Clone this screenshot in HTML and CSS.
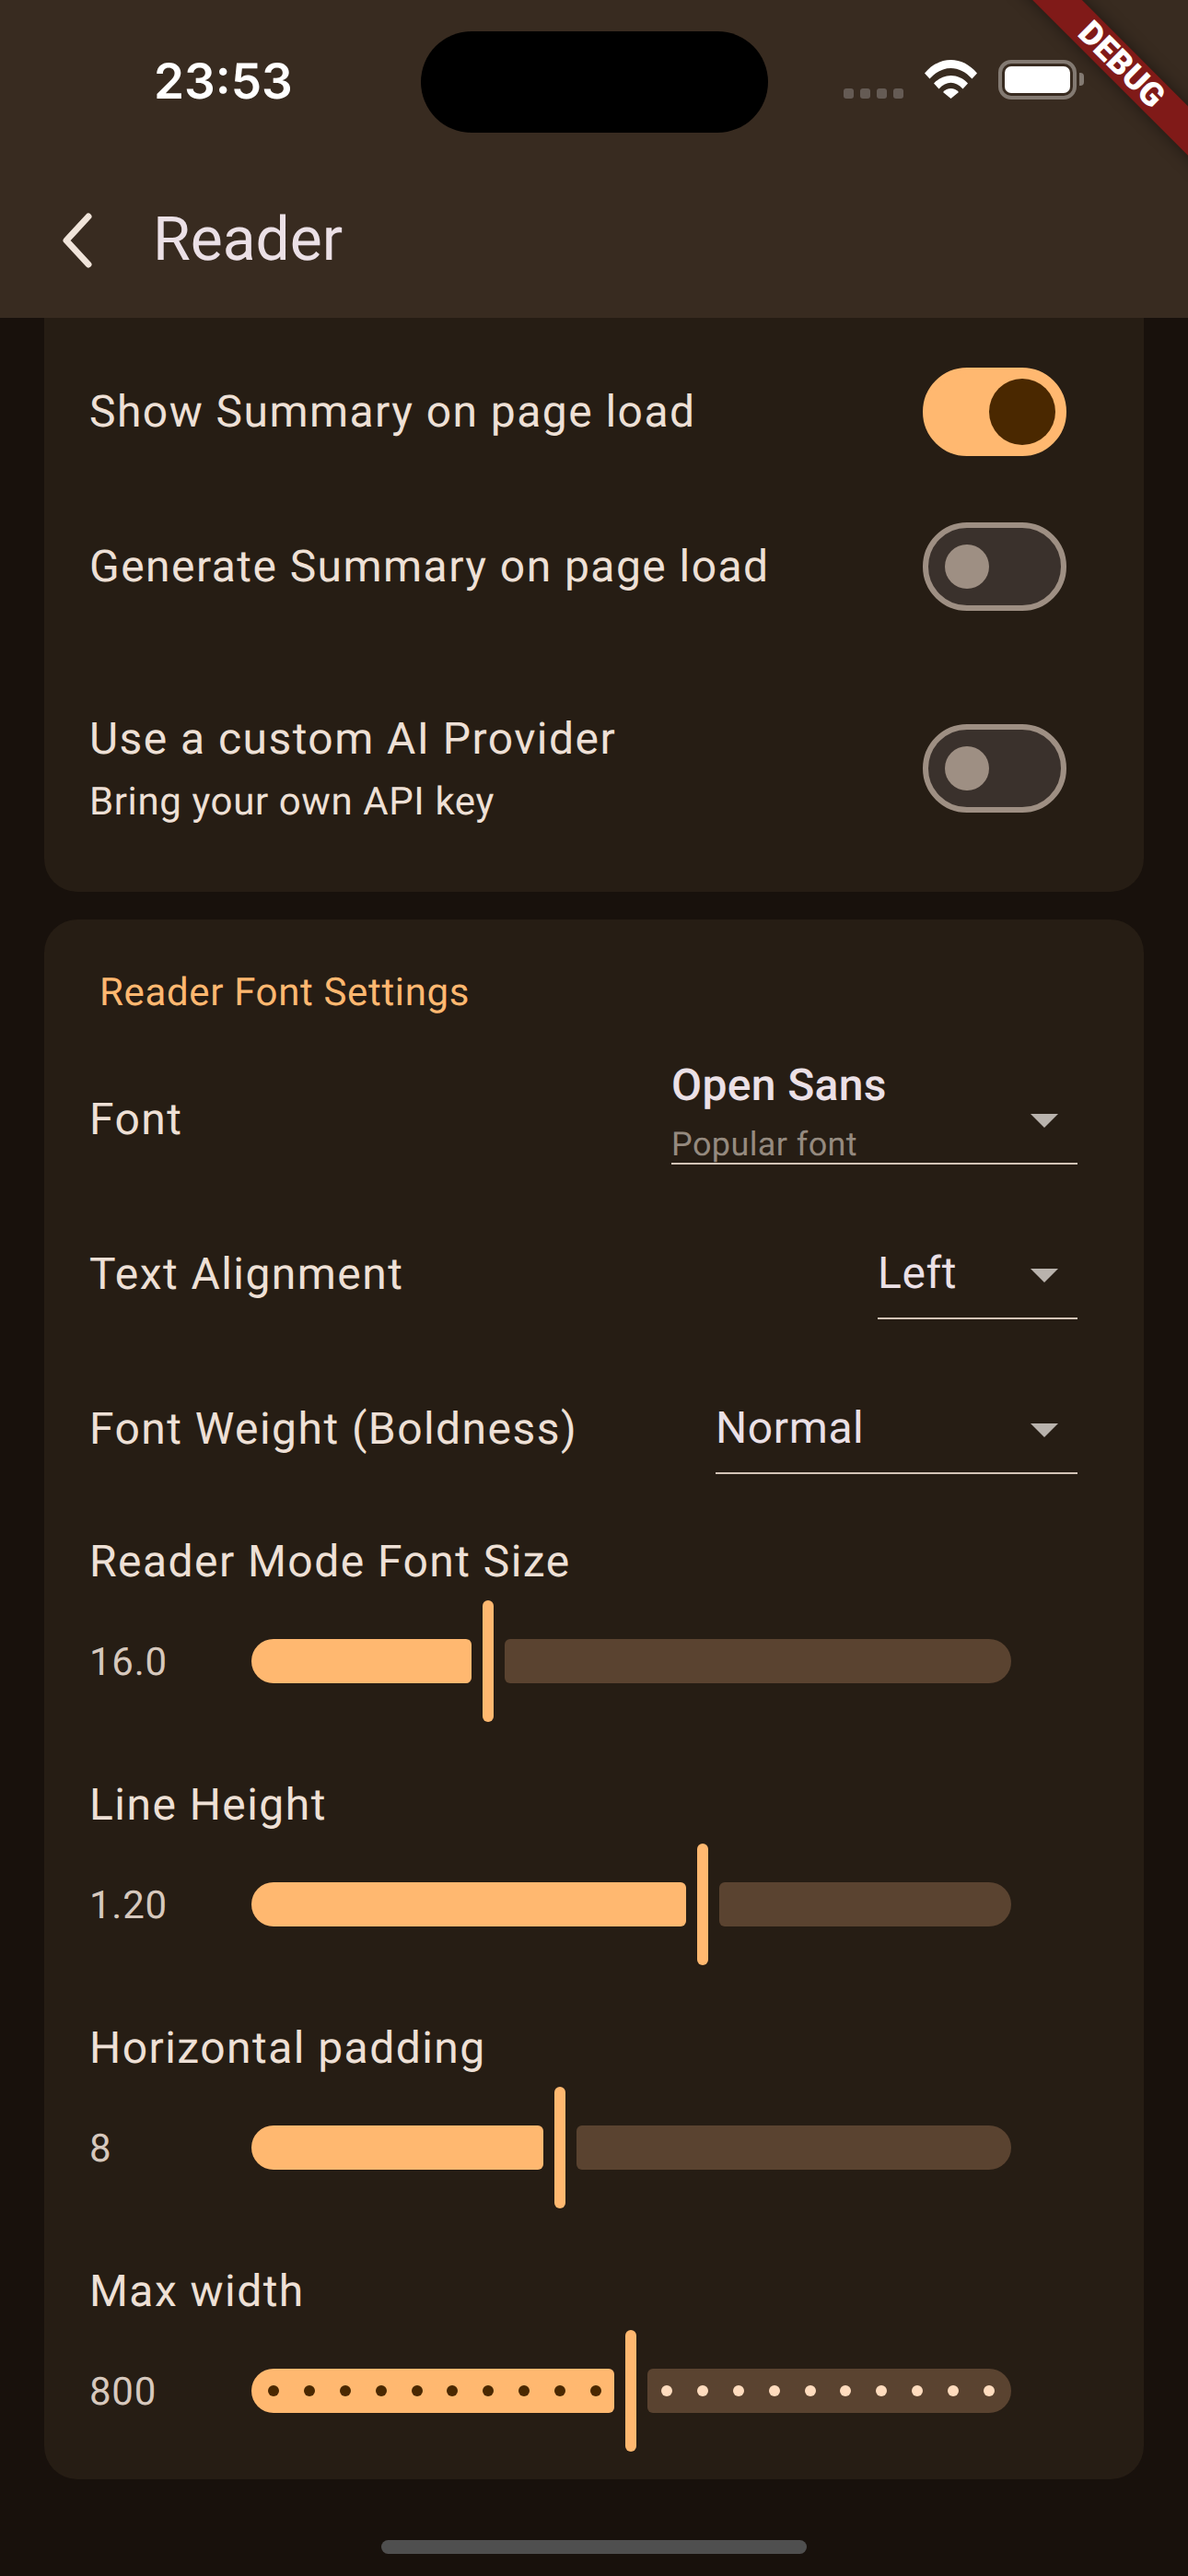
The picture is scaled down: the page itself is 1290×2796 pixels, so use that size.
FILE: index.html
```html
<!DOCTYPE html>
<html lang="en">
  <head>
    <meta charset="UTF-8" />
    <meta name="viewport" content="width=device-width, initial-scale=1.0" />
    <title>Reader</title>
    <link rel="stylesheet" href="styles.css">
  </head>
  <body>
    <header class="app-bar">
      <div class="status-bar">
        <span class="clock">23:53</span>
        <div class="island"></div>
        <div class="status-icons">
          <div class="signal"><i></i><i></i><i></i><i></i></div>
          <svg class="wifi" width="57" height="42" viewBox="0 0 57 42">
            <path d="M0 14.500C16 -4.800 41 -4.800 57 14.500L51.500 20.500C38 5 19 5 5.500 20.500Z" fill="#fff" />
            <path d="M10 25.500C20 14 37 14 47 25.500L41.500 31.500C33.500 22.500 23.500 22.500 15.500 31.500Z" fill="#fff" />
            <path d="M20 35C24.500 29.500 32.500 29.500 37 35L28.500 42Z" fill="#fff" />
          </svg>
          <div class="battery"><div class="battery-level"></div></div>
          <div class="battery-tip"></div>
        </div>
      </div>
      <div class="toolbar">
        <svg class="back" width="40" height="64" viewBox="0 0 40 64">
          <path d="M32 6L8 32L32 58" fill="none" stroke="#f0e4da" stroke-width="7" stroke-linecap="round" stroke-linejoin="round" />
        </svg>
        <h1>Reader</h1>
      </div>
    </header>

    <div class="debug-banner">DEBUG</div>

    <main>
      <section class="card card-top">
        <div class="switch-row">
          <span class="label">Show Summary on page load</span>
          <div class="switch on"><i></i></div>
        </div>
        <div class="switch-row">
          <span class="label">Generate Summary on page load</span>
          <div class="switch"><i></i></div>
        </div>
        <div class="switch-row tall">
          <div class="label-stack">
            <span class="label">Use a custom AI Provider</span>
            <span class="sublabel">Bring your own API key</span>
          </div>
          <div class="switch"><i></i></div>
        </div>
      </section>

      <section class="card card-font">
        <h2>Reader Font Settings</h2>

        <div class="select-row">
          <span class="label">Font</span>
          <div class="dropdown w-font">
            <div class="dropdown-text">
              <span class="font-name">Open Sans</span>
              <span class="font-note">Popular font</span>
            </div>
            <i class="caret"></i>
          </div>
        </div>
        <div class="select-row">
          <span class="label">Text Alignment</span>
          <div class="dropdown w-align">
            <div class="dropdown-text"><span class="value">Left</span></div>
            <i class="caret"></i>
          </div>
        </div>
        <div class="select-row">
          <span class="label">Font Weight (Boldness)</span>
          <div class="dropdown w-weight">
            <div class="dropdown-text"><span class="value">Normal</span></div>
            <i class="caret"></i>
          </div>
        </div>

        <div class="slider-block">
          <span class="label">Reader Mode Font Size</span>
          <div class="slider-row">
            <span class="slider-value">16.0</span>
            <div class="slider">
              <div class="track active" style="width: 239px"></div>
              <div class="thumb"></div>
              <div class="track rest"></div>
            </div>
          </div>
        </div>

        <div class="slider-block">
          <span class="label">Line Height</span>
          <div class="slider-row">
            <span class="slider-value">1.20</span>
            <div class="slider">
              <div class="track active" style="width: 472px"></div>
              <div class="thumb"></div>
              <div class="track rest"></div>
            </div>
          </div>
        </div>

        <div class="slider-block">
          <span class="label">Horizontal padding</span>
          <div class="slider-row">
            <span class="slider-value">8</span>
            <div class="slider">
              <div class="track active" style="width: 317px"></div>
              <div class="thumb"></div>
              <div class="track rest"></div>
            </div>
          </div>
        </div>

        <div class="slider-block">
          <span class="label">Max width</span>
          <div class="slider-row">
            <span class="slider-value">800</span>
            <div class="slider">
              <div class="track active stops" style="width: 394px">
                <i></i><i></i><i></i><i></i><i></i><i></i><i></i><i></i><i></i><i></i>
              </div>
              <div class="thumb"></div>
              <div class="track rest stops">
                <i></i><i></i><i></i><i></i><i></i><i></i><i></i><i></i><i></i><i></i>
              </div>
            </div>
          </div>
        </div>
      </section>
    </main>

    <div class="home-indicator"></div>
  </body>
</html>
```

FILE: styles.css
```css
* {
  box-sizing: border-box;
}

h1,
h2 {
  margin: 0;
  font-weight: 400;
}

body {
  --orange: #ffb870;
  --orange-dark: #4a2800;
  --text: #eee0d6;
  --title: #ebe0e6;
  position: relative;
  margin: 0;
  width: 1290px;
  height: 2796px;
  overflow: hidden;
  background: #18110c;
  color: var(--text);
  font-family: Roboto, "Liberation Sans", sans-serif;
  text-rendering: geometricPrecision;
}

/* top bar */

.app-bar {
  height: 345px;
  background: #382b20;
}

.status-bar {
  display: grid;
  grid-template-columns: 457px 377px 1fr;
  height: 177px;
  padding-top: 34px;
}

.clock {
  align-self: start;
  padding: 19px 0 0 167px;
  color: #fff;
  font-family: Inter, "Liberation Sans", sans-serif;
  font-size: 53px;
  font-weight: 600;
  line-height: 70px;
}

.island {
  height: 110px;
  border-radius: 55px;
  background: #000;
}

.status-icons {
  display: flex;
  align-items: flex-end;
  height: 74px;
  padding-left: 82px;
}

.signal {
  display: flex;
  gap: 7px;
  margin-right: 23px;
  margin-bottom: 1px;

  i {
    width: 11px;
    height: 11px;
    border-radius: 3px;
    background: #655b54;
  }
}

.wifi {
  margin-right: 23px;
  margin-bottom: 1px;
}

.battery {
  width: 85px;
  height: 43px;
  padding: 3px;
  border: 4px solid #837a72;
  border-radius: 14px;
}

.battery-level {
  height: 100%;
  border-radius: 7px;
  background: #fff;
}

.battery-tip {
  width: 5px;
  height: 14px;
  margin: 0 0 15px 3px;
  border-radius: 0 4px 4px 0;
  background: #837a72;
}

.toolbar {
  display: flex;
  align-items: center;
  height: 168px;
  padding-left: 64px;

  h1 {
    margin-left: 62px;
    color: var(--title);
    font-size: 66px;
    line-height: 88px;
  }
}

.debug-banner {
  position: absolute;
  top: 51px;
  left: 1068px;
  width: 300px;
  height: 38px;
  background: #801a18;
  box-shadow: 0 0 18px rgba(0, 0, 0, 0.45);
  color: #fff;
  font-size: 36px;
  font-weight: 900;
  line-height: 38px;
  text-align: center;
  transform: rotate(45deg);
}

/* cards */

main {
  padding: 0 48px;
}

.card {
  background: #261d14;
  border-radius: 36px;
}

.card-top {
  padding: 18px 84px 23px 49px;
  border-top-left-radius: 0;
  border-top-right-radius: 0;
  margin-bottom: 30px;
}

.label {
  font-size: 48px;
  line-height: 64px;
  letter-spacing: 1.45px;
}

.switch-row {
  display: flex;
  align-items: center;
  justify-content: space-between;
  height: 168px;

  &.tall {
    height: 222px;
    margin-top: 24px;
  }
}

.label-stack {
  display: flex;
  flex-direction: column;
  gap: 8px;
  padding-top: 2px;
}

.sublabel {
  font-size: 42px;
  line-height: 58px;
  letter-spacing: 0.6px;
}

.switch {
  display: flex;
  align-items: center;
  width: 156px;
  height: 96px;
  padding-left: 18px;
  border: 6px solid #9e8f83;
  border-radius: 48px;
  background: #3a312c;

  i {
    width: 48px;
    height: 48px;
    border-radius: 50%;
    background: #9e8f83;
  }

  &.on {
    justify-content: flex-end;
    padding: 0 6px 0 0;
    border-color: var(--orange);
    background: var(--orange);

    i {
      width: 72px;
      height: 72px;
      background: var(--orange-dark);
    }
  }
}

.card-font {
  padding: 48px 72px 0 49px;

  h2 {
    margin: 0 0 21px 11px;
    color: var(--orange);
    font-size: 42px;
    line-height: 64px;
    letter-spacing: 0.65px;
  }
}

/* dropdowns */

.select-row {
  display: flex;
  justify-content: space-between;
  height: 168px;

  .label {
    align-self: center;
  }
}

.dropdown {
  display: flex;
  align-items: flex-end;
  justify-content: space-between;
  align-self: flex-end;
  min-height: 96px;
  padding-right: 21px;
  margin-bottom: 35px;
  border-bottom: 2px solid #d3c4b7;
}

.w-font {
  width: 441px;
}

.w-align {
  width: 217px;
}

.w-weight {
  width: 393px;
}

.dropdown-text {
  display: flex;
  flex-direction: column;
}

.value {
  padding-bottom: 12px;
  color: var(--title);
  font-size: 48px;
  line-height: 72px;
  letter-spacing: 0.6px;
}

.font-name {
  color: var(--title);
  font-size: 48px;
  font-weight: 500;
  line-height: 62px;
  letter-spacing: 0.35px;
  margin-bottom: 13px;
}

.font-note {
  color: #958a7f;
  font-size: 36px;
  line-height: 40px;
  letter-spacing: 0.4px;
}

.caret {
  width: 0;
  height: 0;
  margin-bottom: 38px;
  border-top: 15px solid #b9b3ad;
  border-right: 15px solid transparent;
  border-left: 15px solid transparent;
}

/* sliders */

.slider-block {
  padding: 24px 0 30px;

  .label {
    display: block;
    line-height: 72px;
    margin-bottom: 6px;
  }
}

.slider-row {
  display: flex;
  align-items: center;
}

.slider-value {
  flex: 0 0 176px;
  padding-top: 3px;
  color: #d6c8bd;
  font-size: 42px;
  letter-spacing: 0.75px;
}

.slider {
  display: flex;
  flex: 0 0 825px;
  align-items: center;
  gap: 12px;
  height: 132px;
}

.thumb {
  flex: 0 0 12px;
  height: 132px;
  border-radius: 6px;
  background: var(--orange);
}

.track {
  display: flex;
  align-items: center;
  justify-content: space-between;
  height: 48px;

  i {
    width: 12px;
    height: 12px;
    border-radius: 50%;
  }
}

.active {
  flex: none;
  padding: 0 14px 0 18px;
  border-radius: 24px 6px 6px 24px;
  background: var(--orange);

  i {
    background: var(--orange-dark);
  }
}

.rest {
  flex: 1;
  padding: 0 18px 0 15px;
  border-radius: 6px 24px 24px 6px;
  background: #5a4330;

  i {
    background: #ffdcbe;
  }
}

.home-indicator {
  width: 462px;
  height: 15px;
  margin: 66px auto 0;
  border-radius: 8px;
  background: #4f4f4f;
}
```
